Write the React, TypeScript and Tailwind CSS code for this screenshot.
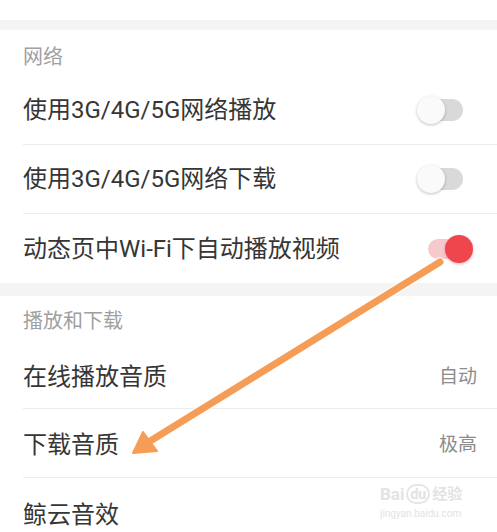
import React from "react";

const FONT = { fontFamily: 'Roboto, "Noto Sans CJK SC", "Noto Sans", sans-serif' };

function ToggleOff() {
  return (
    <div className="relative w-[46px] h-[28px] mr-[34px]">
      <div className="absolute left-[3px] right-0 top-[3px] h-[22px] rounded-full bg-[#d9d9d9]" />
      <div className="absolute left-0 top-0 w-[28px] h-[28px] rounded-full bg-[#fafafa] shadow-[0_1px_3px_rgba(0,0,0,0.25)]" />
    </div>
  );
}

function ToggleOn() {
  return (
    <div className="relative w-[45px] h-[28px] mr-[24px]">
      <div className="absolute left-0 right-[3px] top-[4px] h-[20px] rounded-full bg-[#f6c9cc]" />
      <div className="absolute right-0 top-0 w-[28px] h-[28px] rounded-full bg-[#ef464d] shadow-[0_1px_3px_rgba(200,0,0,0.3)]" />
    </div>
  );
}

function Row({
  label,
  right,
  border = true,
  h = "h-[69px]",
  offset = "",
}: {
  label: string;
  right?: React.ReactNode;
  border?: boolean;
  h?: string;
  offset?: string;
}) {
  return (
    <div
      className={`ml-[23px] ${h} flex items-center justify-between ${offset} ${
        border ? "border-b border-[#ebebeb]" : ""
      }`}
    >
      <span className="text-[24px] leading-[32px] text-[#363636]">{label}</span>
      {right}
    </div>
  );
}

function Value({ t }: { t: string }) {
  return <span className="text-[19px] leading-[28px] text-[#8c8c8c] mr-[20px]">{t}</span>;
}

export default function App() {
  return (
    <div className="relative w-full h-[532px] overflow-hidden bg-white" style={FONT}>
      <div className="h-[20px] bg-white" />
      <div className="h-[10px] bg-[#f4f4f4]" />
      <div className="h-[46px] pl-[23px] pt-[13px]">
        <span className="text-[20px] leading-[28px] text-[#a0a0a0]">网络</span>
      </div>
      <Row label="使用3G/4G/5G网络播放" right={<ToggleOff />} />
      <Row label="使用3G/4G/5G网络下载" right={<ToggleOff />} />
      <Row label="动态页中Wi-Fi下自动播放视频" right={<ToggleOn />} border={false} />
      <div className="h-[13px] bg-[#f4f4f4]" />
      <div className="h-[45px] pl-[23px] pt-[11px]">
        <span className="text-[20px] leading-[28px] text-[#a0a0a0]">播放和下载</span>
      </div>
      <Row label="在线播放音质" right={<Value t="自动" />} h="h-[68px]" offset="pt-[4px]" />
      <Row label="下载音质" right={<Value t="极高" />} h="h-[69px]" offset="pt-[4px]" />
      <Row label="鲸云音效" border={false} h="h-[69px]" offset="pt-[4px]" />

      {/* watermark */}
      <div className="absolute left-[380px] top-[484px] flex flex-col text-[#e3e3e3] select-none">
        <div className="flex items-center gap-[2px] text-[17px] leading-[20px] font-bold">
          <span>Bai</span>
          <span className="rounded-full border-2 border-[#e6e6e6] px-[2px] text-[14px] leading-[16px]">du</span>
          <span className="text-[15px]">经验</span>
        </div>
        <span className="text-[10px] leading-[14px] mt-[3px]">jingyan.baidu.com</span>
      </div>

      {/* annotation arrow */}
      <svg className="absolute inset-0 pointer-events-none" width="497" height="532" viewBox="0 0 497 532">
        <line x1="440" y1="262" x2="147" y2="443" stroke="#ffffff" strokeWidth="10" strokeLinecap="round" opacity="0.7" />
        <line x1="440" y1="262" x2="147" y2="443" stroke="#f59d56" strokeWidth="7" strokeLinecap="round" />
        <polygon points="133,453 143,432 157,451" fill="#f59d56" stroke="#f59d56" strokeWidth="2" strokeLinejoin="round" />
      </svg>
    </div>
  );
}
